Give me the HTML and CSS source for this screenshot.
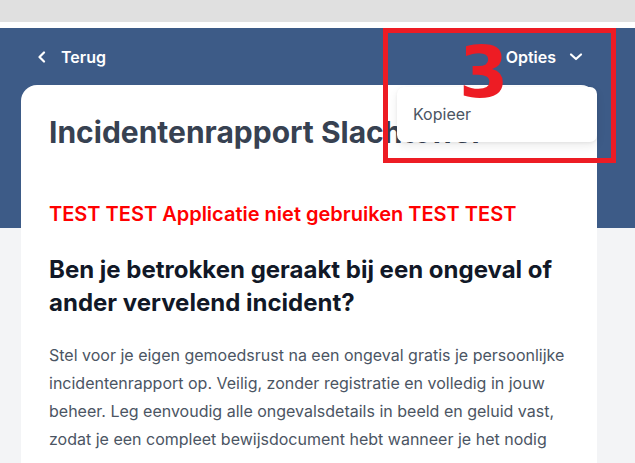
FILE: index.html
```html
<!DOCTYPE html>
<html lang="nl">
<head>
<meta charset="utf-8">
<title>Incidentenrapport</title>
<link rel="stylesheet" href="styles.css">
</head>
<body>
<div class="chrome"></div>
<div class="page">
  <header class="hero">
    <nav class="nav">
      <a class="nav-link" href="#">
        <svg class="chev-left" width="10" height="12" viewBox="0 0 10 12"><path d="M7 1.5 L2.5 6 L7 10.5" fill="none" stroke="#fff" stroke-width="2.2" stroke-linecap="round" stroke-linejoin="round"/></svg>
        <span>Terug</span>
      </a>
      <div class="options">
        <span>Opties</span>
        <svg class="chev-down" width="14" height="10" viewBox="0 0 14 10"><path d="M2 2.5 L7 7 L12 2.5" fill="none" stroke="#fff" stroke-width="2.2" stroke-linecap="round" stroke-linejoin="round"/></svg>
        <div class="menu"><span>Kopieer</span></div>
      </div>
    </nav>
  </header>
  <main class="card">
    <h1 class="title">Incidentenrapport Slachtoffer</h1>
    <p class="warning">TEST TEST Applicatie niet gebruiken TEST TEST</p>
    <h2 class="question">Ben je betrokken geraakt bij een ongeval of ander vervelend incident?</h2>
    <p class="intro">Stel voor je eigen gemoedsrust na een ongeval gratis je persoonlijke incidentenrapport op. Veilig, zonder registratie en volledig in jouw beheer. Leg eenvoudig alle ongevalsdetails in beeld en geluid vast, zodat je een compleet bewijsdocument hebt wanneer je het nodig</p>
  </main>
</div>
<div class="annotation"><span class="annotation-num">3</span></div>
</body>
</html>
```

FILE: styles.css
```css
* { box-sizing: border-box; }
html, body { margin: 0; padding: 0; }
body {
  font-family: Inter, "Noto Sans", sans-serif;
  background: #f3f4f6;
  overflow: hidden;
  height: 463px;
  position: relative;
}
.chrome {
  height: 28px;
  background: #e0e0e0;
  border-bottom: 6px solid #ffffff;
}
.page {
  background: linear-gradient(#3d5b87 0, #3d5b87 200px, #f3f4f6 200px);
}
.hero {
  padding: 0 38px 0 21px;
}
.nav {
  height: 57px;
  display: flex;
  align-items: center;
  justify-content: space-between;
  padding: 0 14px 0 16px;
  color: #fff;
  font-weight: 600;
  font-size: 16px;
}
.nav-link {
  display: flex;
  align-items: center;
  gap: 14px;
  color: #fff;
  text-decoration: none;
}
.options {
  display: flex;
  align-items: center;
  gap: 13px;
  position: relative;
}
.menu {
  position: absolute;
  top: 40px;
  right: -14px;
  width: 200px;
  height: 55px;
  background: #fff;
  border-radius: 7px;
  box-shadow: 0 4px 10px rgba(0,0,0,0.08), 0 1px 3px rgba(0,0,0,0.06);
  padding: 0 16px;
  display: flex;
  align-items: center;
  font-weight: 400;
  color: #4b5563;
  font-size: 16px;
  z-index: 5;
}
.card {
  margin: 0 38px 0 21px;
  background: #fff;
  border-radius: 16px 16px 0 0;
  padding: 29px 28px 40px;
  min-height: 400px;
}
.title {
  margin: 0;
  font-size: 30px;
  line-height: 36px;
  font-weight: 700;
  color: #374151;
  white-space: nowrap;
}
.warning {
  margin: 50px 0 0;
  font-size: 20px;
  line-height: 28px;
  font-weight: 600;
  color: #ff0000;
}
.question {
  margin: 25px 0 0;
  font-size: 24px;
  line-height: 33px;
  font-weight: 700;
  color: #111827;
}
.intro {
  margin: 22px 0 0;
  font-size: 16px;
  line-height: 28px;
  color: #4b5563;
}
.annotation {
  position: absolute;
  left: 383px;
  top: 28px;
  width: 233px;
  height: 135px;
  border: 5px solid #ed1c24;
  z-index: 10;
}
.annotation-num {
  position: absolute;
  left: 71px;
  top: 4px;
  font-family: "DejaVu Sans", sans-serif;
  font-weight: 700;
  font-size: 71px;
  line-height: 71px;
  color: #ed1c24;
}
```
